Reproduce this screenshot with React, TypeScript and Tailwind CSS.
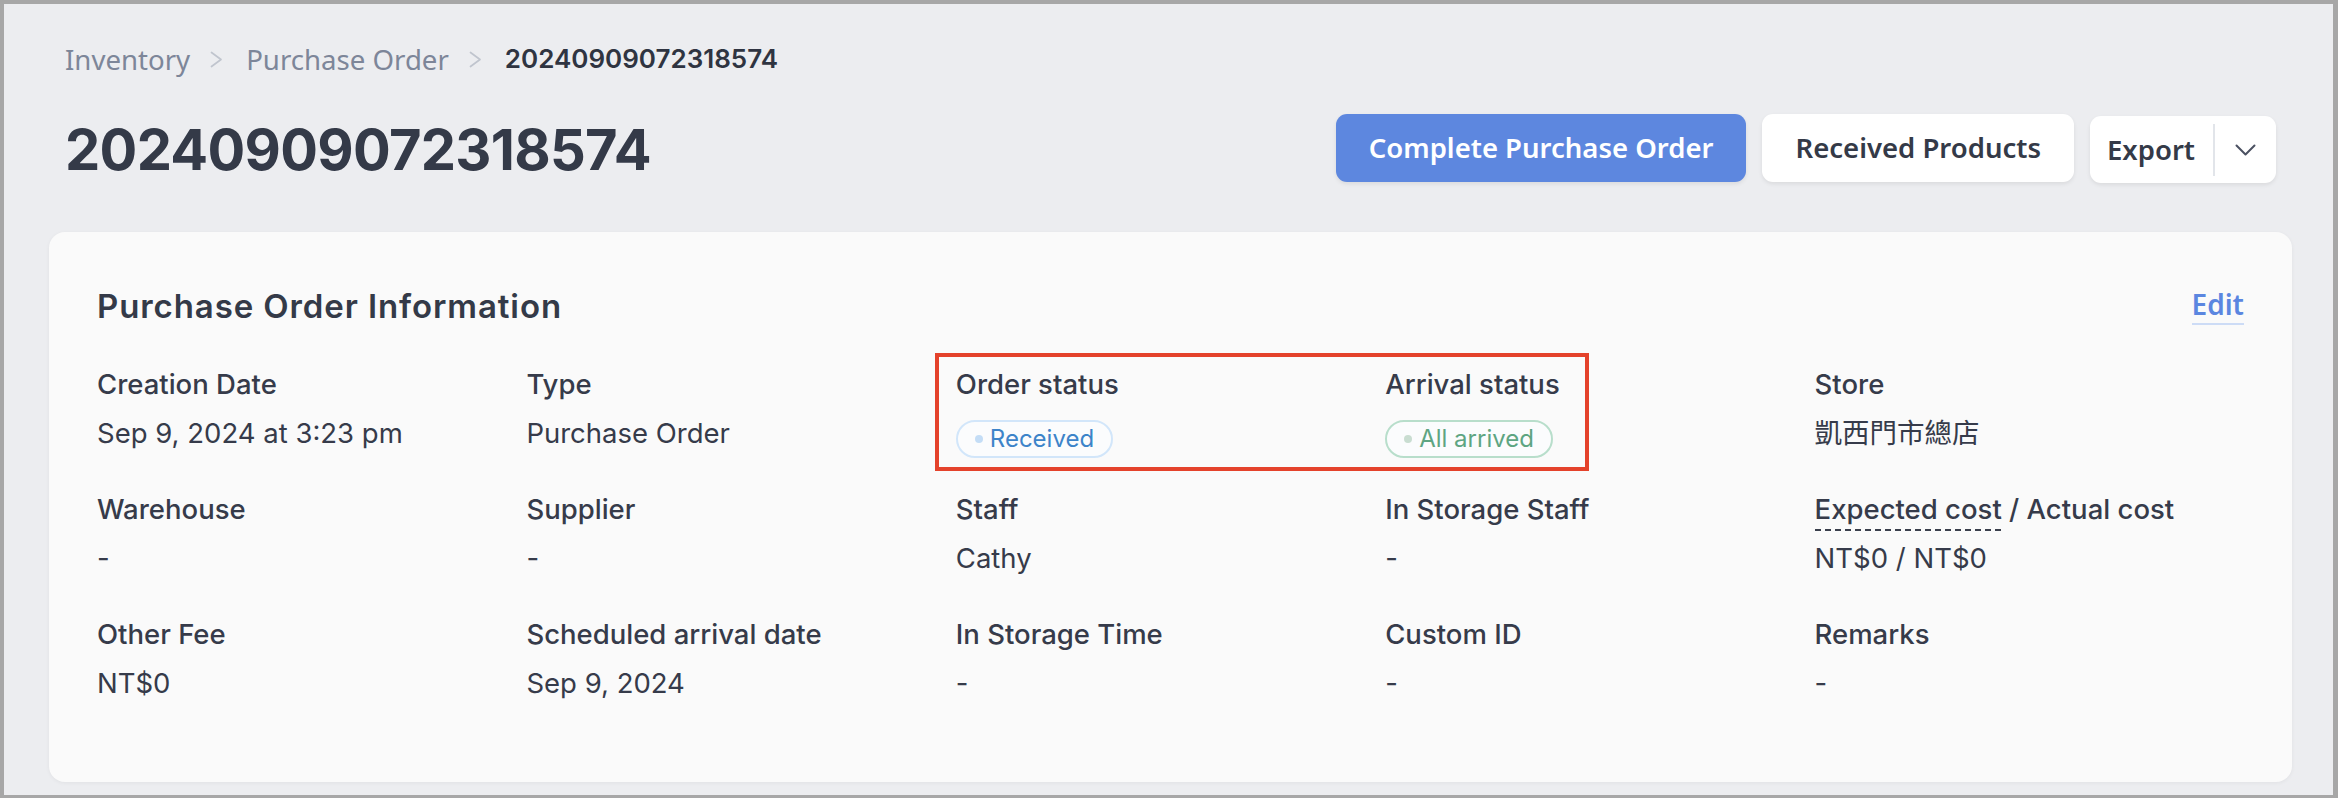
import React from "react";

const inter = "font-['Inter','Noto_Sans_CJK_TC',sans-serif]";
const noto = "font-['Noto_Sans','Noto_Sans_CJK_TC',sans-serif]";

function Crumb({ children }: { children: React.ReactNode }) {
  return <span className={`${noto} text-[27.6px] leading-[40px] text-[#7d8699]`}>{children}</span>;
}

function Chevron() {
  return (
    <svg width="13" height="17" viewBox="0 0 13 17" className="ml-[20px] mr-[23px]" fill="none">
      <polyline points="1.5,1.5 11,8.5 1.5,15.5" stroke="#c0c5ce" strokeWidth="1.7" strokeLinecap="round" strokeLinejoin="round" />
    </svg>
  );
}

function Badge({ text, tone }: { text: string; tone: "blue" | "green" }) {
  const box =
    tone === "blue"
      ? "border-[#d2e6fa] text-[#3d84c9]"
      : "border-[#b8decb] text-[#5ea582]";
  const dot = tone === "blue" ? "bg-[#c4ddf6]" : "bg-[#c9ddd1]";
  return (
    <span
      className={`mt-[4px] inline-flex h-[38px] items-center rounded-full border-2 bg-[#fbfcfd] pl-[17px] pr-[17px] ${box}`}
    >
      <span className={`mr-[7px] h-[8px] w-[8px] rounded-full ${dot}`} />
      <span className={`${inter} text-[24px] leading-[30px]`}>{text}</span>
    </span>
  );
}

type Field = { label: React.ReactNode; value: React.ReactNode };

export default function App() {
  const fields: Field[] = [
    { label: "Creation Date", value: "Sep 9, 2024 at 3:23 pm" },
    { label: "Type", value: "Purchase Order" },
    { label: "Order status", value: <Badge text="Received" tone="blue" /> },
    { label: "Arrival status", value: <Badge text="All arrived" tone="green" /> },
    { label: "Store", value: "凱西門市總店" },
    { label: "Warehouse", value: "-" },
    { label: "Supplier", value: "-" },
    { label: "Staff", value: "Cathy" },
    { label: "In Storage Staff", value: "-" },
    {
      label: (
        <>
          <span className="relative inline-block">
            Expected cost
            <span className="absolute left-0 right-0 top-[38px] h-[2px] bg-[linear-gradient(to_right,#3a3f4c_60%,transparent_0)] bg-[length:10px_2px]" />
          </span>{" "}
          / Actual cost
        </>
      ),
      value: "NT$0 / NT$0",
    },
    { label: "Other Fee", value: "NT$0" },
    { label: "Scheduled arrival date", value: "Sep 9, 2024" },
    { label: "In Storage Time", value: "-" },
    { label: "Custom ID", value: "-" },
    { label: "Remarks", value: "-" },
  ];

  return (
    <div className="h-[798px] w-[2338px] overflow-hidden border-b-[3px] border-l-4 border-r-[5px] border-t-4 border-[#a7a7a7] bg-[#ecedf0] pl-[45px] pr-[41px]">
      {/* page header */}
      <div className="px-[16px] pt-[35px]">
        <nav className="flex h-[40px] items-center">
          <Crumb>Inventory</Crumb>
          <Chevron />
          <Crumb>Purchase Order</Crumb>
          <Chevron />
          <span className={`${inter} text-[26px] font-semibold leading-[40px] text-[#2f3441]`}>20240909072318574</span>
        </nav>

        <div className="mt-[35px] flex h-[68px] items-center justify-between">
          <h1 className={`${inter} pt-[3px] text-[56px] font-bold leading-[68px] tracking-[-0.7px] text-[#343a48]`}>20240909072318574</h1>
          <div className="flex items-center gap-[16px]">
            <button className={`${noto} h-[68px] rounded-[11px] bg-[#5d87df] px-[33px] text-[27.5px] font-semibold text-white shadow-[0_2px_4px_rgba(0,0,0,0.08)]`}>
              Complete Purchase Order
            </button>
            <button className={`${noto} h-[68px] rounded-[11px] bg-white px-[33px] text-[27.5px] font-semibold text-[#343a48] shadow-[0_2px_4px_rgba(0,0,0,0.08)]`}>
              Received Products
            </button>
            <div className="mt-[3px] flex h-[67px] items-center rounded-[11px] bg-white pl-[17px] shadow-[0_2px_4px_rgba(0,0,0,0.08)]">
              <span className={`${noto} text-[27.5px] font-semibold text-[#343a48]`}>Export</span>
              <span className="ml-[18px] h-[52px] w-[2px] bg-[#e2e5ea]" />
              <span className="flex w-[61px] items-center justify-center">
                <svg width="21" height="12" viewBox="0 0 21 12" fill="none">
                  <polyline points="1.5,1.5 10.5,10.5 19.5,1.5" stroke="#4b5162" strokeWidth="2" strokeLinecap="round" strokeLinejoin="round" />
                </svg>
              </span>
            </div>
          </div>
        </div>
      </div>

      {/* information card */}
      <section className="mt-[50px] h-[550px] rounded-[16px] bg-[#fafafa] px-[48px] pt-[52px] shadow-[0_1px_4px_rgba(0,0,0,0.05)]">
        <div className="flex h-[44px] items-center justify-between">
          <h2 className={`${inter} text-[33px] font-semibold leading-[44px] tracking-[0.9px] text-[#343a48]`}>Purchase Order Information</h2>
          <a className={`${noto} border-b-2 border-[#cddcf6] pb-[3px] text-[28px] font-semibold leading-[32px] text-[#5b86e0]`}>Edit</a>
        </div>

        <div className="relative mt-[38px] grid grid-cols-5 gap-y-[40px]">
          {fields.map((f, i) => (
            <div key={i} className={`${inter} flex flex-col text-[27.5px] text-[#363b4a]`}>
              <div className="h-[36px] font-medium leading-[36px]">{f.label}</div>
              <div className="mt-[13px] h-[36px] leading-[36px]">{f.value}</div>
            </div>
          ))}
          {/* highlight around the status fields */}
          <div className="pointer-events-none absolute left-[838px] top-[-13px] h-[118px] w-[654px] border-4 border-[#e4422b]" />
        </div>
      </section>
    </div>
  );
}
